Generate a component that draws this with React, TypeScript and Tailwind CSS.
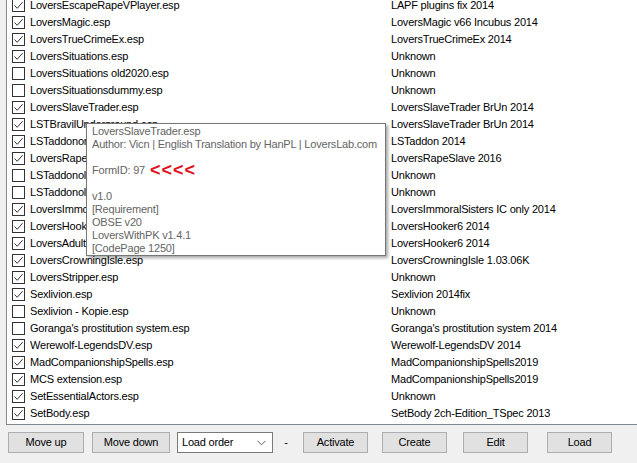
import type { ReactNode } from 'react';

type Plugin = { file: string; title: string; active: boolean };

const plugins: Plugin[] = [
  { file: 'LoversEscapeRapeVPlayer.esp', title: 'LAPF plugins fix 2014', active: true },
  { file: 'LoversMagic.esp', title: 'LoversMagic v66 Incubus 2014', active: true },
  { file: 'LoversTrueCrimeEx.esp', title: 'LoversTrueCrimeEx 2014', active: true },
  { file: 'LoversSituations.esp', title: 'Unknown', active: true },
  { file: 'LoversSituations old2020.esp', title: 'Unknown', active: false },
  { file: 'LoversSituationsdummy.esp', title: 'Unknown', active: false },
  { file: 'LoversSlaveTrader.esp', title: 'LoversSlaveTrader BrUn 2014', active: true },
  { file: 'LSTBravilUnderground.esp', title: 'LoversSlaveTrader BrUn 2014', active: true },
  { file: 'LSTaddonoriginal.esp', title: 'LSTaddon 2014', active: true },
  { file: 'LoversRapeSlave.esp', title: 'LoversRapeSlave 2016', active: true },
  { file: 'LSTaddonold.esp', title: 'Unknown', active: false },
  { file: 'LSTaddonold2.esp', title: 'Unknown', active: false },
  { file: 'LoversImmoralSisters.esp', title: 'LoversImmoralSisters IC only 2014', active: true },
  { file: 'LoversHooker.esp', title: 'LoversHooker6 2014', active: true },
  { file: 'LoversAdultPlayPlus.esp', title: 'LoversHooker6 2014', active: true },
  { file: 'LoversCrowningIsle.esp', title: 'LoversCrowningIsle 1.03.06K', active: true },
  { file: 'LoversStripper.esp', title: 'Unknown', active: true },
  { file: 'Sexlivion.esp', title: 'Sexlivion 2014fix', active: true },
  { file: 'Sexlivion - Kopie.esp', title: 'Unknown', active: false },
  { file: "Goranga's prostitution system.esp", title: "Goranga's prostitution system 2014", active: false },
  { file: 'Werewolf-LegendsDV.esp', title: 'Werewolf-LegendsDV 2014', active: true },
  { file: 'MadCompanionshipSpells.esp', title: 'MadCompanionshipSpells2019', active: true },
  { file: 'MCS extension.esp', title: 'MadCompanionshipSpells2019', active: true },
  { file: 'SetEssentialActors.esp', title: 'Unknown', active: true },
  { file: 'SetBody.esp', title: 'SetBody 2ch-Edition_TSpec 2013', active: true },
];

function CheckBox({ checked }: { checked: boolean }) {
  return (
    <div className="w-[13px] h-[13px] border border-[#333333] bg-white flex items-center justify-center shrink-0">
      {checked && (
        <svg width="11" height="11" viewBox="0 0 11 11">
          <path d="M1.5 5.5 L4.2 8.3 L9.6 2.2" fill="none" stroke="#333333" strokeWidth="1" />
        </svg>
      )}
    </div>
  );
}

function Button({ children, className }: { children: ReactNode; className: string }) {
  return (
    <button className={`h-[21px] bg-[#e1e1e1] border border-[#adadad] text-black text-[11px] tracking-[-0.2px] leading-none ${className}`}>
      {children}
    </button>
  );
}

export default function App() {
  return (
    <div className="w-[637px] h-[463px] bg-[#f0f0f0] overflow-hidden relative text-[11px] tracking-[-0.2px] text-black font-['Liberation_Sans',Arial,sans-serif]">
      {/* plugin list, scrolled a bit so the first row is cut at the top */}
      <div className="ml-[6px] h-[425px] border-l border-b border-[#828790] bg-white overflow-hidden">
        <div className="-mt-[3px]">
          {plugins.map((p) => (
            <div key={p.file} className="grid grid-cols-[384px_1fr] h-[17px] items-center">
              <div className="flex items-center pl-[5px] gap-[5px] whitespace-nowrap overflow-hidden">
                <CheckBox checked={p.active} />
                <span>{p.file}</span>
              </div>
              <span className="whitespace-nowrap">{p.title}</span>
            </div>
          ))}
        </div>
      </div>

      {/* bottom toolbar */}
      <div className="flex items-center mt-[7px] h-[21px]">
        <Button className="ml-[8px] w-[76px]">Move up</Button>
        <Button className="ml-[8px] w-[78px]">Move down</Button>
        <div className="ml-[7px] w-[96px] h-[21px] bg-white border border-[#7a7a7a] flex items-center justify-between pl-[4px] pr-[6px]">
          <span>Load order</span>
          <svg width="9" height="6" viewBox="0 0 9 6">
            <path d="M0.5 0.8 L4.5 4.8 L8.5 0.8" fill="none" stroke="#606060" strokeWidth="1" />
          </svg>
        </div>
        <span className="ml-[10px] w-[6px] text-center">-</span>
        <Button className="ml-[14px] w-[65px]">Activate</Button>
        <Button className="ml-[14px] w-[65px]">Create</Button>
        <Button className="ml-[16px] w-[65px]">Edit</Button>
        <Button className="ml-[19px] w-[65px]">Load</Button>
      </div>

      {/* hover tooltip */}
      <div className="absolute left-[86px] top-[123px] w-[300px] h-[133px] bg-white border border-[#767676] shadow-[2px_2px_3px_rgba(0,0,0,0.35)] pl-[5px] pt-[1px] text-[#646464] leading-[13px] whitespace-nowrap">
        <div>LoversSlaveTrader.esp</div>
        <div>Author: Vicn | English Translation by HanPL | LoversLab.com</div>
        <div className="h-[13px]" />
        <div className="flex items-center">
          <span>FormID: 97</span>
          <span className="ml-[5px] text-[#e0141e] font-bold text-[18px] leading-[13px] tracking-[1px]">&lt;&lt;&lt;&lt;</span>
        </div>
        <div className="h-[13px]" />
        <div>v1.0</div>
        <div>[Requirement]</div>
        <div>OBSE v20</div>
        <div>LoversWithPK v1.4.1</div>
        <div>[CodePage 1250]</div>
      </div>
    </div>
  );
}
